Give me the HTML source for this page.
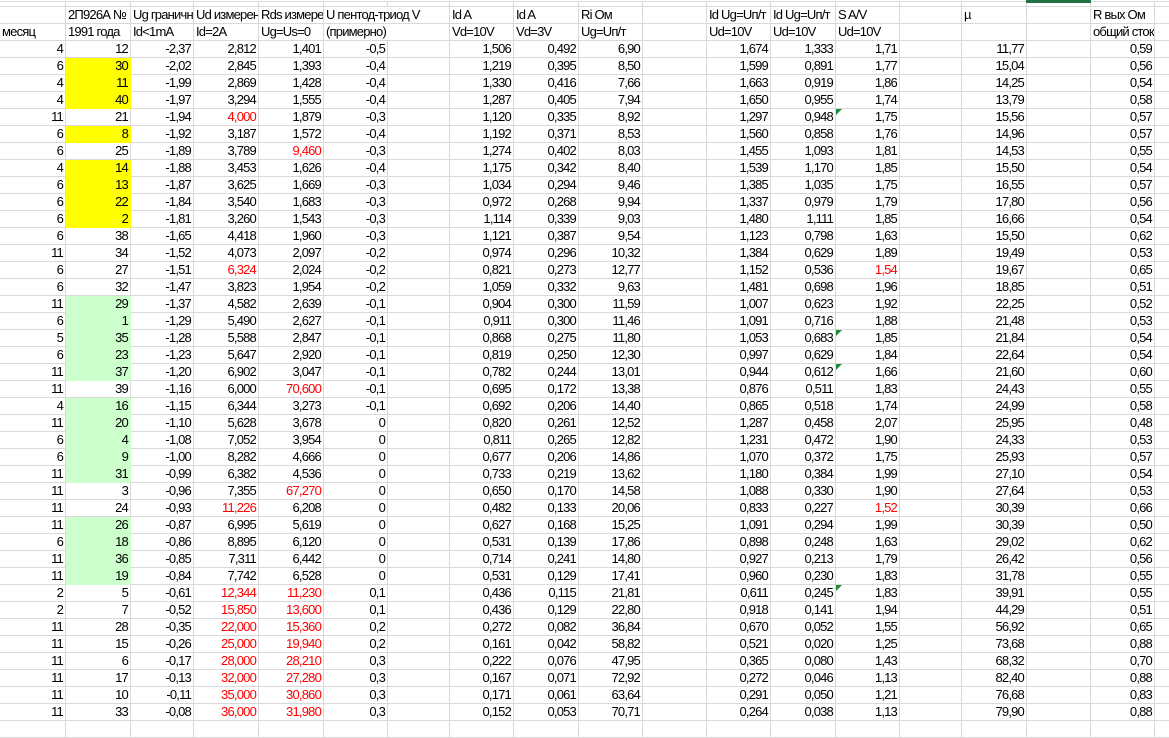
<!DOCTYPE html>
<html><head><meta charset="utf-8">
<style>
html,body{margin:0;padding:0;background:#fff;width:1169px;height:722px;overflow:hidden}
table{border-collapse:collapse;table-layout:fixed;width:1175px;font-family:"Liberation Sans",Arial,sans-serif;font-size:13px;letter-spacing:-0.8px;color:#000;position:absolute;left:-1px;top:0}
td{border:1px solid #d9d9d9;padding:0 2px 0 2px;text-align:right;overflow:hidden;white-space:nowrap;height:16px;line-height:16px;position:relative;box-sizing:content-box}
tr.t td{height:3px;line-height:3px;padding:0}
tr.h td{text-align:left}
.y{background:#ffff00;border-color:#ffff00}
.g{background:#ccffcc;border-color:#ccffcc}
.r{color:#ff0000}
.tri::before{content:"";position:absolute;left:0;top:0;border-top:6px solid #1e8a3a;border-right:6px solid transparent}
.sel{border-top:3px solid #217346}
</style></head><body>
<table>
<colgroup><col style="width:66px"><col style="width:65px"><col style="width:63px"><col style="width:65px"><col style="width:65px"><col style="width:64px"><col style="width:62px"><col style="width:64px"><col style="width:65px"><col style="width:64px"><col style="width:64px"><col style="width:64px"><col style="width:65px"><col style="width:64px"><col style="width:62px"><col style="width:65px"><col style="width:64px"><col style="width:64px"><col style="width:20px"></colgroup>
<tr class="t"><td style="width:66px"></td><td style="width:65px"></td><td style="width:63px"></td><td style="width:65px"></td><td style="width:65px"></td><td style="width:64px"></td><td style="width:62px"></td><td style="width:64px"></td><td style="width:65px"></td><td style="width:64px"></td><td style="width:64px"></td><td style="width:64px"></td><td style="width:65px"></td><td style="width:64px"></td><td style="width:62px"></td><td style="width:65px"></td><td class="sel" style="width:64px"></td><td style="width:64px"></td><td style="width:20px"></td></tr>
<tr class="h"><td></td><td>2П926А №</td><td>Ug граничн</td><td>Ud измерен</td><td>Rds измерен</td><td colspan="2" style="overflow:visible">U пентод-триод V</td><td>Id A</td><td>Id A</td><td>Ri Ом</td><td></td><td>Id Ug=Uп/т</td><td>Id Ug=Uп/т</td><td>S A/V</td><td></td><td>µ</td><td></td><td>R вых Ом</td><td></td></tr>
<tr class="h"><td>месяц</td><td>1991 года</td><td>Id&lt;1mA</td><td>Id=2A</td><td>Ug=Us=0</td><td colspan="2">(примерно)</td><td>Vd=10V</td><td>Vd=3V</td><td>Ug=Uп/т</td><td></td><td>Ud=10V</td><td>Ud=10V</td><td>Ud=10V</td><td></td><td></td><td></td><td>общий сток</td><td></td></tr>
<tr><td>4</td><td>12</td><td>-2,37</td><td>2,812</td><td>1,401</td><td>-0,5</td><td></td><td>1,506</td><td>0,492</td><td>6,90</td><td></td><td>1,674</td><td>1,333</td><td>1,71</td><td></td><td>11,77</td><td></td><td>0,59</td><td></td></tr>
<tr><td>6</td><td class="y">30</td><td>-2,02</td><td>2,845</td><td>1,393</td><td>-0,4</td><td></td><td>1,219</td><td>0,395</td><td>8,50</td><td></td><td>1,599</td><td>0,891</td><td>1,77</td><td></td><td>15,04</td><td></td><td>0,56</td><td></td></tr>
<tr><td>4</td><td class="y">11</td><td>-1,99</td><td>2,869</td><td>1,428</td><td>-0,4</td><td></td><td>1,330</td><td>0,416</td><td>7,66</td><td></td><td>1,663</td><td>0,919</td><td>1,86</td><td></td><td>14,25</td><td></td><td>0,54</td><td></td></tr>
<tr><td>4</td><td class="y">40</td><td>-1,97</td><td>3,294</td><td>1,555</td><td>-0,4</td><td></td><td>1,287</td><td>0,405</td><td>7,94</td><td></td><td>1,650</td><td>0,955</td><td>1,74</td><td></td><td>13,79</td><td></td><td>0,58</td><td></td></tr>
<tr><td>11</td><td>21</td><td>-1,94</td><td class="r">4,000</td><td>1,879</td><td>-0,3</td><td></td><td>1,120</td><td>0,335</td><td>8,92</td><td></td><td>1,297</td><td>0,948</td><td class="tri">1,75</td><td></td><td>15,56</td><td></td><td>0,57</td><td></td></tr>
<tr><td>6</td><td class="y">8</td><td>-1,92</td><td>3,187</td><td>1,572</td><td>-0,4</td><td></td><td>1,192</td><td>0,371</td><td>8,53</td><td></td><td>1,560</td><td>0,858</td><td>1,76</td><td></td><td>14,96</td><td></td><td>0,57</td><td></td></tr>
<tr><td>6</td><td>25</td><td>-1,89</td><td>3,789</td><td class="r">9,460</td><td>-0,3</td><td></td><td>1,274</td><td>0,402</td><td>8,03</td><td></td><td>1,455</td><td>1,093</td><td>1,81</td><td></td><td>14,53</td><td></td><td>0,55</td><td></td></tr>
<tr><td>4</td><td class="y">14</td><td>-1,88</td><td>3,453</td><td>1,626</td><td>-0,4</td><td></td><td>1,175</td><td>0,342</td><td>8,40</td><td></td><td>1,539</td><td>1,170</td><td>1,85</td><td></td><td>15,50</td><td></td><td>0,54</td><td></td></tr>
<tr><td>6</td><td class="y">13</td><td>-1,87</td><td>3,625</td><td>1,669</td><td>-0,3</td><td></td><td>1,034</td><td>0,294</td><td>9,46</td><td></td><td>1,385</td><td>1,035</td><td>1,75</td><td></td><td>16,55</td><td></td><td>0,57</td><td></td></tr>
<tr><td>6</td><td class="y">22</td><td>-1,84</td><td>3,540</td><td>1,683</td><td>-0,3</td><td></td><td>0,972</td><td>0,268</td><td>9,94</td><td></td><td>1,337</td><td>0,979</td><td>1,79</td><td></td><td>17,80</td><td></td><td>0,56</td><td></td></tr>
<tr><td>6</td><td class="y">2</td><td>-1,81</td><td>3,260</td><td>1,543</td><td>-0,3</td><td></td><td>1,114</td><td>0,339</td><td>9,03</td><td></td><td>1,480</td><td>1,111</td><td>1,85</td><td></td><td>16,66</td><td></td><td>0,54</td><td></td></tr>
<tr><td>6</td><td>38</td><td>-1,65</td><td>4,418</td><td>1,960</td><td>-0,3</td><td></td><td>1,121</td><td>0,387</td><td>9,54</td><td></td><td>1,123</td><td>0,798</td><td>1,63</td><td></td><td>15,50</td><td></td><td>0,62</td><td></td></tr>
<tr><td>11</td><td>34</td><td>-1,52</td><td>4,073</td><td>2,097</td><td>-0,2</td><td></td><td>0,974</td><td>0,296</td><td>10,32</td><td></td><td>1,384</td><td>0,629</td><td>1,89</td><td></td><td>19,49</td><td></td><td>0,53</td><td></td></tr>
<tr><td>6</td><td>27</td><td>-1,51</td><td class="r">6,324</td><td>2,024</td><td>-0,2</td><td></td><td>0,821</td><td>0,273</td><td>12,77</td><td></td><td>1,152</td><td>0,536</td><td class="r">1,54</td><td></td><td>19,67</td><td></td><td>0,65</td><td></td></tr>
<tr><td>6</td><td>32</td><td>-1,47</td><td>3,823</td><td>1,954</td><td>-0,2</td><td></td><td>1,059</td><td>0,332</td><td>9,63</td><td></td><td>1,481</td><td>0,698</td><td>1,96</td><td></td><td>18,85</td><td></td><td>0,51</td><td></td></tr>
<tr><td>11</td><td class="g">29</td><td>-1,37</td><td>4,582</td><td>2,639</td><td>-0,1</td><td></td><td>0,904</td><td>0,300</td><td>11,59</td><td></td><td>1,007</td><td>0,623</td><td>1,92</td><td></td><td>22,25</td><td></td><td>0,52</td><td></td></tr>
<tr><td>6</td><td class="g">1</td><td>-1,29</td><td>5,490</td><td>2,627</td><td>-0,1</td><td></td><td>0,911</td><td>0,300</td><td>11,46</td><td></td><td>1,091</td><td>0,716</td><td>1,88</td><td></td><td>21,48</td><td></td><td>0,53</td><td></td></tr>
<tr><td>5</td><td class="g">35</td><td>-1,28</td><td>5,588</td><td>2,847</td><td>-0,1</td><td></td><td>0,868</td><td>0,275</td><td>11,80</td><td></td><td>1,053</td><td>0,683</td><td class="tri">1,85</td><td></td><td>21,84</td><td></td><td>0,54</td><td></td></tr>
<tr><td>6</td><td class="g">23</td><td>-1,23</td><td>5,647</td><td>2,920</td><td>-0,1</td><td></td><td>0,819</td><td>0,250</td><td>12,30</td><td></td><td>0,997</td><td>0,629</td><td>1,84</td><td></td><td>22,64</td><td></td><td>0,54</td><td></td></tr>
<tr><td>11</td><td class="g">37</td><td>-1,20</td><td>6,902</td><td>3,047</td><td>-0,1</td><td></td><td>0,782</td><td>0,244</td><td>13,01</td><td></td><td>0,944</td><td>0,612</td><td class="tri">1,66</td><td></td><td>21,60</td><td></td><td>0,60</td><td></td></tr>
<tr><td>11</td><td>39</td><td>-1,16</td><td>6,000</td><td class="r">70,600</td><td>-0,1</td><td></td><td>0,695</td><td>0,172</td><td>13,38</td><td></td><td>0,876</td><td>0,511</td><td>1,83</td><td></td><td>24,43</td><td></td><td>0,55</td><td></td></tr>
<tr><td>4</td><td class="g">16</td><td>-1,15</td><td>6,344</td><td>3,273</td><td>-0,1</td><td></td><td>0,692</td><td>0,206</td><td>14,40</td><td></td><td>0,865</td><td>0,518</td><td>1,74</td><td></td><td>24,99</td><td></td><td>0,58</td><td></td></tr>
<tr><td>11</td><td class="g">20</td><td>-1,10</td><td>5,628</td><td>3,678</td><td>0</td><td></td><td>0,820</td><td>0,261</td><td>12,52</td><td></td><td>1,287</td><td>0,458</td><td>2,07</td><td></td><td>25,95</td><td></td><td>0,48</td><td></td></tr>
<tr><td>6</td><td class="g">4</td><td>-1,08</td><td>7,052</td><td>3,954</td><td>0</td><td></td><td>0,811</td><td>0,265</td><td>12,82</td><td></td><td>1,231</td><td>0,472</td><td>1,90</td><td></td><td>24,33</td><td></td><td>0,53</td><td></td></tr>
<tr><td>6</td><td class="g">9</td><td>-1,00</td><td>8,282</td><td>4,666</td><td>0</td><td></td><td>0,677</td><td>0,206</td><td>14,86</td><td></td><td>1,070</td><td>0,372</td><td>1,75</td><td></td><td>25,93</td><td></td><td>0,57</td><td></td></tr>
<tr><td>11</td><td class="g">31</td><td>-0,99</td><td>6,382</td><td>4,536</td><td>0</td><td></td><td>0,733</td><td>0,219</td><td>13,62</td><td></td><td>1,180</td><td>0,384</td><td>1,99</td><td></td><td>27,10</td><td></td><td>0,54</td><td></td></tr>
<tr><td>11</td><td>3</td><td>-0,96</td><td>7,355</td><td class="r">67,270</td><td>0</td><td></td><td>0,650</td><td>0,170</td><td>14,58</td><td></td><td>1,088</td><td>0,330</td><td>1,90</td><td></td><td>27,64</td><td></td><td>0,53</td><td></td></tr>
<tr><td>11</td><td>24</td><td>-0,93</td><td class="r">11,226</td><td>6,208</td><td>0</td><td></td><td>0,482</td><td>0,133</td><td>20,06</td><td></td><td>0,833</td><td>0,227</td><td class="r">1,52</td><td></td><td>30,39</td><td></td><td>0,66</td><td></td></tr>
<tr><td>11</td><td class="g">26</td><td>-0,87</td><td>6,995</td><td>5,619</td><td>0</td><td></td><td>0,627</td><td>0,168</td><td>15,25</td><td></td><td>1,091</td><td>0,294</td><td>1,99</td><td></td><td>30,39</td><td></td><td>0,50</td><td></td></tr>
<tr><td>6</td><td class="g">18</td><td>-0,86</td><td>8,895</td><td>6,120</td><td>0</td><td></td><td>0,531</td><td>0,139</td><td>17,86</td><td></td><td>0,898</td><td>0,248</td><td>1,63</td><td></td><td>29,02</td><td></td><td>0,62</td><td></td></tr>
<tr><td>11</td><td class="g">36</td><td>-0,85</td><td>7,311</td><td>6,442</td><td>0</td><td></td><td>0,714</td><td>0,241</td><td>14,80</td><td></td><td>0,927</td><td>0,213</td><td>1,79</td><td></td><td>26,42</td><td></td><td>0,56</td><td></td></tr>
<tr><td>11</td><td class="g">19</td><td>-0,84</td><td>7,742</td><td>6,528</td><td>0</td><td></td><td>0,531</td><td>0,129</td><td>17,41</td><td></td><td>0,960</td><td>0,230</td><td>1,83</td><td></td><td>31,78</td><td></td><td>0,55</td><td></td></tr>
<tr><td>2</td><td>5</td><td>-0,61</td><td class="r">12,344</td><td class="r">11,230</td><td>0,1</td><td></td><td>0,436</td><td>0,115</td><td>21,81</td><td></td><td>0,611</td><td>0,245</td><td class="tri">1,83</td><td></td><td>39,91</td><td></td><td>0,55</td><td></td></tr>
<tr><td>2</td><td>7</td><td>-0,52</td><td class="r">15,850</td><td class="r">13,600</td><td>0,1</td><td></td><td>0,436</td><td>0,129</td><td>22,80</td><td></td><td>0,918</td><td>0,141</td><td>1,94</td><td></td><td>44,29</td><td></td><td>0,51</td><td></td></tr>
<tr><td>11</td><td>28</td><td>-0,35</td><td class="r">22,000</td><td class="r">15,360</td><td>0,2</td><td></td><td>0,272</td><td>0,082</td><td>36,84</td><td></td><td>0,670</td><td>0,052</td><td>1,55</td><td></td><td>56,92</td><td></td><td>0,65</td><td></td></tr>
<tr><td>11</td><td>15</td><td>-0,26</td><td class="r">25,000</td><td class="r">19,940</td><td>0,2</td><td></td><td>0,161</td><td>0,042</td><td>58,82</td><td></td><td>0,521</td><td>0,020</td><td>1,25</td><td></td><td>73,68</td><td></td><td>0,88</td><td></td></tr>
<tr><td>11</td><td>6</td><td>-0,17</td><td class="r">28,000</td><td class="r">28,210</td><td>0,3</td><td></td><td>0,222</td><td>0,076</td><td>47,95</td><td></td><td>0,365</td><td>0,080</td><td>1,43</td><td></td><td>68,32</td><td></td><td>0,70</td><td></td></tr>
<tr><td>11</td><td>17</td><td>-0,13</td><td class="r">32,000</td><td class="r">27,280</td><td>0,3</td><td></td><td>0,167</td><td>0,071</td><td>72,92</td><td></td><td>0,272</td><td>0,046</td><td>1,13</td><td></td><td>82,40</td><td></td><td>0,88</td><td></td></tr>
<tr><td>11</td><td>10</td><td>-0,11</td><td class="r">35,000</td><td class="r">30,860</td><td>0,3</td><td></td><td>0,171</td><td>0,061</td><td>63,64</td><td></td><td>0,291</td><td>0,050</td><td>1,21</td><td></td><td>76,68</td><td></td><td>0,83</td><td></td></tr>
<tr><td>11</td><td>33</td><td>-0,08</td><td class="r">36,000</td><td class="r">31,980</td><td>0,3</td><td></td><td>0,152</td><td>0,053</td><td>70,71</td><td></td><td>0,264</td><td>0,038</td><td>1,13</td><td></td><td>79,90</td><td></td><td>0,88</td><td></td></tr>
<tr><td></td><td></td><td></td><td></td><td></td><td></td><td></td><td></td><td></td><td></td><td></td><td></td><td></td><td></td><td></td><td></td><td></td><td></td><td></td></tr>
</table>
</body></html>
